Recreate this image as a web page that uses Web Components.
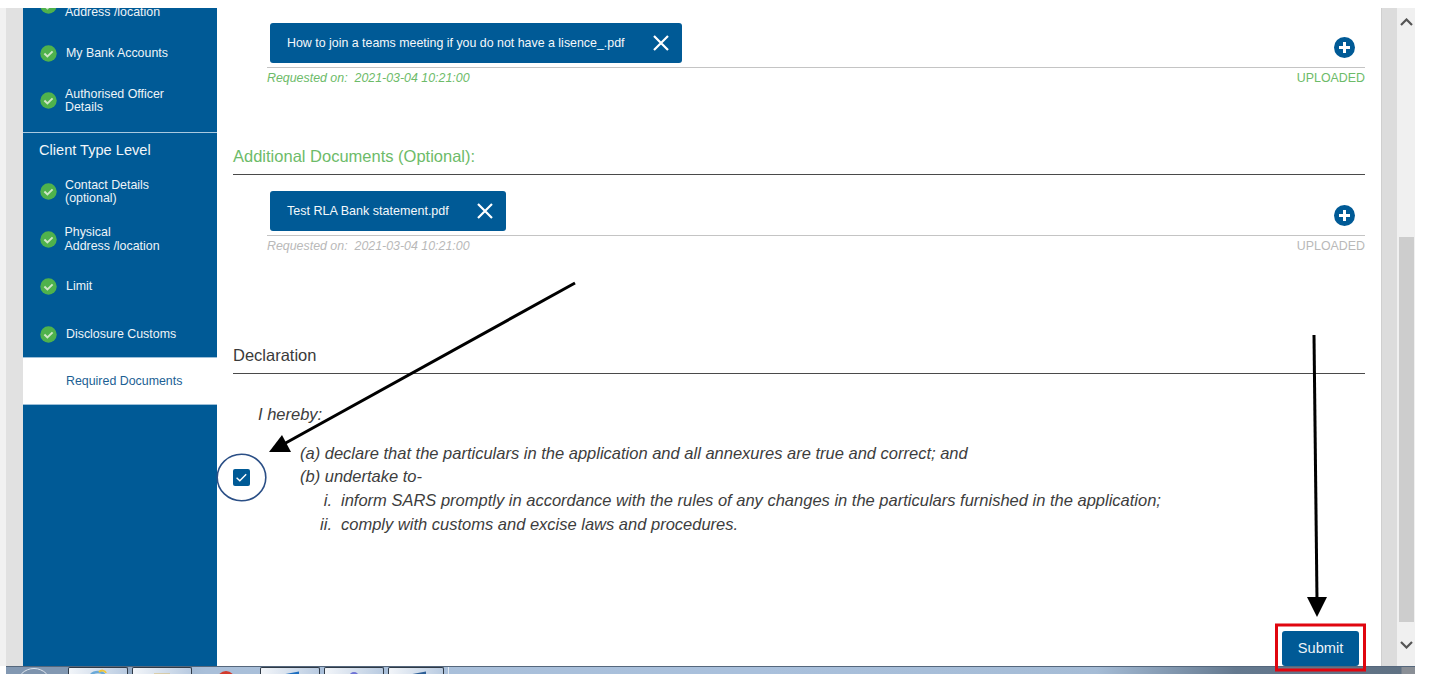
<!DOCTYPE html>
<html>
<head>
<meta charset="utf-8">
<title>Required Documents</title>
<style>
  html, body { margin:0; height:682px; overflow:hidden; background:#fff; }
  body { font-family:"Liberation Sans", Arial, sans-serif; position:relative; }
</style>
</head>
<body>
<app-shell>
  <side-nav slot="nav">
    <side-item done><span style="margin-left:-1px">&nbsp;<br>Address /location</span></side-item>
    <side-item done>My Bank Accounts</side-item>
    <side-item done><span style="margin-left:-1px">Authorised Officer<br>Details</span></side-item>
    <side-heading>Client Type Level</side-heading>
    <side-item done><span style="margin-left:-1px">Contact Details<br>(optional)</span></side-item>
    <side-item done><span style="margin-left:-1.5px">Physical<br>Address /location</span></side-item>
    <side-item done>Limit</side-item>
    <side-item done>Disclosure Customs</side-item>
    <side-item active>Required Documents</side-item>
  </side-nav>
  <main-panel slot="main">
    <file-row name="How to join a teams meeting if you do not have a lisence_.pdf" tone="green" gap="28"></file-row>
    <section-title tone="green" style="margin-top:62px">Additional Documents (Optional):</section-title>
    <file-row name="Test RLA Bank statement.pdf" tone="grey" gap="28" wide style="margin-top:16px"></file-row>
    <section-title style="margin-top:93px">Declaration</section-title>
    <declaration-block></declaration-block>
    <submit-button></submit-button>
  </main-panel>
  <scroll-rail slot="rail"></scroll-rail>
</app-shell>
<task-bar></task-bar>
<mark-up></mark-up>

<script>
const checkIcon = `<svg width="17" height="17" viewBox="0 0 17 17"><circle cx="8.5" cy="8.5" r="8.2" fill="#4fb24c"/><path d="M4.4 8.6l3 2.8 5.2-5" fill="none" stroke="#cfe6c8" stroke-width="2"/></svg>`;

class AppShell extends HTMLElement {
  constructor(){
    super();
    this.attachShadow({ mode:"open" });
    this.shadowRoot.innerHTML = `
      <style>
        :host{ display:flex; height:658px; margin-top:8px; width:1415px; background:#fff; overflow:hidden; }
        .edge{ width:6px; background:#f1f1f1; flex:none; }
        .gutter{ width:17px; background:#e1e1e1; flex:none; }
        ::slotted([slot=main]){ flex:1; min-width:0; }
      </style>
      <div class="edge"></div>
      <div class="gutter"></div>
      <slot name="nav"></slot>
      <slot name="main"></slot>
      <slot name="rail"></slot>
    `;
  }
}

class SideNav extends HTMLElement {
  constructor(){
    super();
    this.attachShadow({ mode:"open" });
    this.shadowRoot.innerHTML = `
      <style>
        :host{ display:block; width:194px; flex:none; background:#005a96; overflow:hidden; }
        .inner{ margin-top:-27px; }
      </style>
      <div class="inner"><slot></slot></div>
    `;
  }
}

class SideItem extends HTMLElement {
  constructor(){
    super();
    this.attachShadow({ mode:"open" });
  }
  connectedCallback(){
    const active = this.hasAttribute("active");
    this.shadowRoot.innerHTML = `
      <style>
        :host{
          display:flex; align-items:center; height:47.5px; box-sizing:border-box;
          padding:3px 0 0 17px; font-size:12.4px; line-height:13.6px;
          color:${active ? "#1c5f94" : "#eef4f8"};
          background:${active ? "#fff" : "transparent"};
          ${active ? "border-top:1px solid #9dbfd8; border-bottom:1px solid #9dbfd8;" : ""}
        }
        .ic{ width:17px; height:17px; flex:none; margin:-1px 9px 0 0; }
        .ic svg{ display:block; }
      </style>
      <div class="ic">${this.hasAttribute("done") ? checkIcon : ""}</div>
      <slot></slot>
    `;
  }
}

class SideHeading extends HTMLElement {
  constructor(){
    super();
    this.attachShadow({ mode:"open" });
    this.shadowRoot.innerHTML = `
      <style>
        :host{
          display:flex; align-items:center; box-sizing:border-box; height:35.5px; margin-top:8px;
          border-top:1.5px solid #a9c9e0; padding-left:16px; font-size:14.6px; color:#f2f6f9;
        }
      </style>
      <slot></slot>
    `;
  }
}

class MainPanel extends HTMLElement {
  constructor(){
    super();
    this.attachShadow({ mode:"open" });
    this.shadowRoot.innerHTML = `
      <style>
        :host{ display:block; box-sizing:border-box; padding:15px 16px 0 16px; background:#fff; overflow:hidden; }
      </style>
      <slot></slot>
    `;
  }
}

class FileRow extends HTMLElement {
  constructor(){
    super();
    this.attachShadow({ mode:"open" });
  }
  connectedCallback(){
    const green = this.getAttribute("tone") === "green";
    const c = green ? "#6dbb69" : "#b9b9b9";
    const size = this.hasAttribute("wide") ? 12.55 : 12.4;
    this.shadowRoot.innerHTML = `
      <style>
        :host{ display:block; margin-left:34px; }
        .top{ display:flex; justify-content:space-between; align-items:flex-end; border-bottom:1.5px solid #c4c4c4; padding:0 10px 4px 3px; }
        .chip{ display:flex; align-items:center; height:40px; box-sizing:border-box; border-radius:3px; background:#005a96; color:#f4f8fb; font-size:${size}px; padding:0 13px 0 17px; }
        .chip span{ margin-top:-1px; }
        .chip svg{ margin-left:${this.getAttribute("gap")}px; display:block; }
        .plus{ display:block; margin-bottom:5px; }
        .meta{ display:flex; justify-content:space-between; color:${c}; font-size:12.4px; line-height:14px; padding-top:3px; }
        i{ white-space:pre; }
      </style>
      <div class="top">
        <div class="chip"><span>${this.getAttribute("name")}</span>
          <svg width="16" height="16" viewBox="0 0 16 16"><path d="M1 1l14 14M15 1L1 15" stroke="#fff" stroke-width="2.2"/></svg>
        </div>
        <svg class="plus" width="21" height="21" viewBox="0 0 21 21"><circle cx="10.5" cy="10.5" r="10.5" fill="#005a96"/><path d="M10.5 5v11M5 10.5h11" stroke="#fff" stroke-width="3"/></svg>
      </div>
      <div class="meta"><i>Requested on:  2021-03-04 10:21:00</i><span>UPLOADED</span></div>
    `;
  }
}

class SectionTitle extends HTMLElement {
  constructor(){
    super();
    this.attachShadow({ mode:"open" });
  }
  connectedCallback(){
    const green = this.getAttribute("tone") === "green";
    this.shadowRoot.innerHTML = `
      <style>
        :host{ display:block; font-size:16.5px; line-height:18px; padding-bottom:9px; border-bottom:1.5px solid #4a4a4a; color:${green ? "#6dbb69" : "#3a3a3a"}; }
      </style>
      <slot></slot>
    `;
  }
}

class DeclarationBlock extends HTMLElement {
  constructor(){
    super();
    this.attachShadow({ mode:"open" });
    this.shadowRoot.innerHTML = `
      <style>
        :host{ display:block; font-size:16.5px; font-style:italic; color:#3d3d3d; line-height:23.7px; }
        .lead{ padding-left:25px; margin-top:29px; }
        .body{ display:flex; margin-top:15px; }
        .box{ width:17px; height:17px; border-radius:2px; background:#005a96; flex:none; margin-top:27px; }
        .box svg{ display:block; }
        .list{ margin-left:50px; }
        .sub{ display:grid; grid-template-columns:32px auto; column-gap:9px; }
        .sub b{ font-weight:normal; text-align:right; }
      </style>
      <div class="lead">I hereby:</div>
      <div class="body">
        <div class="box"><svg width="17" height="17" viewBox="0 0 17 17"><path d="M3.6 8.8l3.2 3 6.4-6.6" fill="none" stroke="#fff" stroke-width="1.4"/></svg></div>
        <div class="list">
          <div>(a) declare that the particulars in the application and all annexures are true and correct; and</div>
          <div>(b) undertake to-</div>
          <div class="sub"><b>i.</b><span>inform SARS promptly in accordance with the rules of any changes in the particulars furnished in the application;</span></div>
          <div class="sub"><b>ii.</b><span>comply with customs and excise laws and procedures.</span></div>
        </div>
      </div>
    `;
  }
}

class SubmitButton extends HTMLElement {
  constructor(){
    super();
    this.attachShadow({ mode:"open" });
    this.shadowRoot.innerHTML = `
      <style>
        :host{ display:flex; justify-content:flex-end; margin-top:94px; padding-right:6px; }
        button{ width:77px; height:35px; border:0; border-radius:3px; background:#005a96; color:#eef4f8; font:14.6px "Liberation Sans", Arial, sans-serif; padding:0; }
      </style>
      <button>Submit</button>
    `;
  }
}

class ScrollRail extends HTMLElement {
  constructor(){
    super();
    this.attachShadow({ mode:"open" });
    this.shadowRoot.innerHTML = `
      <style>
        :host{ display:flex; flex:none; width:34px; }
        .gut{ width:16px; background:#dcdcdc; border-left:1px solid #cfcfcf; box-sizing:border-box; }
        .track{ flex:1; background:#f0f0f0; display:flex; flex-direction:column; align-items:center; }
        .track svg{ flex:none; display:block; }
        .thumb{ width:15px; height:385px; background:#cdcdcd; margin-top:211px; }
        .up{ margin-top:10px; }
        .down{ margin-top:19px; }
      </style>
      <div class="gut"></div>
      <div class="track">
        <svg class="up" width="13" height="8" viewBox="0 0 13 8"><path d="M1 7l5.5-5.5L12 7" fill="none" stroke="#555" stroke-width="2.2"/></svg>
        <div class="thumb"></div>
        <svg class="down" width="13" height="8" viewBox="0 0 13 8"><path d="M1 1l5.5 5.5L12 1" fill="none" stroke="#555" stroke-width="2.2"/></svg>
      </div>
    `;
  }
}

class TaskBar extends HTMLElement {
  constructor(){
    super();
    this.attachShadow({ mode:"open" });
    this.shadowRoot.innerHTML = `
      <style>
        :host{
          display:flex; height:8px; width:1409px; margin-left:6px; box-sizing:border-box; overflow:hidden;
          border-top:1px solid #55677c;
          background:linear-gradient(90deg,#8298b2 0,#8298b2 60px,#a9bfd9 200px,#a9c0dc 750px,#a5bcd6 1090px,#64798f 1230px,#5f7183 1395px,#8a8f96 1396px,#8a8f96 100%);
        }
        .start{ width:62px; flex:none; display:flex; justify-content:center; }
        .orb{ width:36px; height:36px; border-radius:50%; background:#7d93ad; border:1.5px solid #dfe6ee; box-sizing:border-box; flex:none; margin:1px 0 0 -6px; }
        .btn{ width:60px; flex:none; margin-right:4px; box-sizing:border-box; border:1px solid #2f3a47; border-bottom:0; background:linear-gradient(90deg,#f2f5f9,#b9cbe1); border-radius:2px 2px 0 0; overflow:hidden; display:flex; justify-content:center; }
        .plain{ width:64px; flex:none; margin:0 4px 0 -4px; display:flex; justify-content:center; padding-left:4px; box-sizing:border-box; }
        .sep{ width:1px; flex:none; background:#e4ebf3; }
        svg{ display:block; }
      </style>
      <div class="start"><div class="orb"></div></div>
      <div class="btn"><svg width="22" height="7" viewBox="0 0 22 7"><path d="M3 8C5 5 8 4 11 4s6 1 7 4" fill="none" stroke="#6aa9d8" stroke-width="2.4"/><path d="M12 4c2-2 6-2 7 1" fill="none" stroke="#f0c63a" stroke-width="2"/></svg></div>
      <div class="btn"><svg width="18" height="7" viewBox="0 0 18 7"><rect x="1" y="5.5" width="16" height="2" fill="#d8b968"/></svg></div>
      <div class="plain"><svg width="18" height="7" viewBox="0 0 18 7"><circle cx="9" cy="13" r="9" fill="#d33a2c"/></svg></div>
      <div class="btn"><svg width="20" height="7" viewBox="0 0 20 7"><path d="M0 7L19 3.5V7z" fill="#1f6fc0"/></svg></div>
      <div class="btn"><svg width="12" height="7" viewBox="0 0 12 7"><circle cx="6" cy="9" r="5" fill="#6f74d6"/></svg></div>
      <div class="btn" style="width:56px"><svg width="20" height="7" viewBox="0 0 20 7"><path d="M1 7L20 3.5V7z" fill="#2d5f97"/></svg></div>
      <div class="sep"></div>
    `;
  }
}

// hand drawn annotations lying over the screenshot
class MarkUp extends HTMLElement {
  constructor(){
    super();
    this.attachShadow({ mode:"open" });
    this.shadowRoot.innerHTML = `
      <style>
        :host{ display:block; position:absolute; left:0; top:0; width:1432px; height:682px; pointer-events:none; }
        svg{ display:block; }
      </style>
      <svg width="1432" height="682" viewBox="0 0 1432 682">
        <ellipse cx="241.5" cy="477.5" rx="24.3" ry="23.2" fill="none" stroke="#2b4f86" stroke-width="1.6"/>
        <path d="M575 283L282 445" stroke="#000" stroke-width="3" fill="none"/>
        <path d="M269 452L282 435L291 452z" fill="#000"/>
        <path d="M1314 335L1317 600" stroke="#000" stroke-width="3" fill="none"/>
        <path d="M1317 617L1307 597H1327z" fill="#000"/>
        <rect x="1276.5" y="625" width="88" height="45" fill="none" stroke="#e0060f" stroke-width="3"/>
      </svg>
    `;
  }
}

customElements.define("app-shell", AppShell);
customElements.define("side-nav", SideNav);
customElements.define("side-item", SideItem);
customElements.define("side-heading", SideHeading);
customElements.define("main-panel", MainPanel);
customElements.define("file-row", FileRow);
customElements.define("section-title", SectionTitle);
customElements.define("declaration-block", DeclarationBlock);
customElements.define("submit-button", SubmitButton);
customElements.define("scroll-rail", ScrollRail);
customElements.define("task-bar", TaskBar);
customElements.define("mark-up", MarkUp);
</script>
</body>
</html>
